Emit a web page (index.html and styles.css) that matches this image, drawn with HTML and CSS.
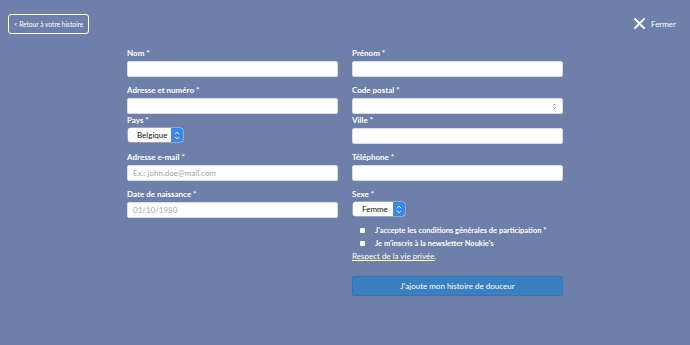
FILE: index.html
```html
<!DOCTYPE html>
<html lang="fr">
<head>
<meta charset="utf-8">
<title>Mon histoire</title>
<link rel="stylesheet" href="styles.css">
</head>
<body>
<div class="page">
  <header class="topbar">
    <a class="back" href="#">&lt; Retour à votre histoire</a>
    <a class="close" href="#">
      <svg width="11" height="11" viewBox="0 0 11 11"><path d="M1 1L10 10M10 1L1 10" stroke="#fff" stroke-width="1.8" stroke-linecap="round"/></svg>
      <span>Fermer</span>
    </a>
  </header>

  <form class="form">
    <div class="field r1"><label>Nom *</label><div class="input"></div></div>
    <div class="field r1"><label>Prénom *</label><div class="input"></div></div>

    <div class="field"><label>Adresse et numéro *</label><div class="input"></div></div>
    <div class="field"><label>Code postal *</label><div class="input spin"><svg width="3" height="7" viewBox="0 0 3 7"><path d="M0.5 2.5L1.5 1L2.5 2.5M0.5 4.5L1.5 6L2.5 4.5" stroke="#777" stroke-width="0.8" fill="none"/></svg></div></div>

    <div class="field tight"><label>Pays *</label><div class="select pays"><span>Belgique</span><i class="step"><svg width="6" height="9" viewBox="0 0 6 9"><path d="M1 3.2L3 1.2L5 3.2M1 5.8L3 7.8L5 5.8" stroke="#fff" stroke-width="1" fill="none"/></svg></i></div></div>
    <div class="field tight"><label>Ville *</label><div class="input"></div></div>

    <div class="field"><label>Adresse e-mail *</label><div class="input ph">Ex.: john.doe@mail.com</div></div>
    <div class="field"><label>Téléphone *</label><div class="input"></div></div>

    <div class="field"><label>Date de naissance *</label><div class="input ph">01/10/1980</div></div>
    <div class="field"><label>Sexe *</label><div class="select sexe"><span>Femme</span><i class="step"><svg width="6" height="9" viewBox="0 0 6 9"><path d="M1 3.2L3 1.2L5 3.2M1 5.8L3 7.8L5 5.8" stroke="#fff" stroke-width="1" fill="none"/></svg></i></div></div>

    <div class="extra">
      <div class="check"><span class="box"></span><span>J'accepte les conditions générales de participation *</span></div>
      <div class="check"><span class="box"></span><span>Je m'inscris à la newsletter Noukie's</span></div>
      <p class="privacy"><a href="#">Respect de la vie privée</a>.</p>
      <button type="button" class="submit">J'ajoute mon histoire de douceur</button>
    </div>
  </form>
</div>
</body>
</html>
```

FILE: styles.css
```css
* { box-sizing: border-box; }
html, body { margin: 0; padding: 0; }
body {
  background: #6e7faa;
  font-family: Lato, "Open Sans", sans-serif;
  color: #fff;
  width: 690px;
  height: 345px;
  overflow: hidden;
}
.page { padding: 14px 14px 0 8px; }
.topbar {
  display: flex;
  justify-content: space-between;
  align-items: flex-start;
  height: 33px;
}
.back {
  display: block;
  width: 81px;
  height: 20px;
  border: 1px solid #fff;
  border-radius: 3px;
  color: #fff;
  text-decoration: none;
  font-size: 6.6px;
  line-height: 18px;
  text-align: center;
  white-space: nowrap;
}
.close {
  display: flex;
  align-items: center;
  gap: 6px;
  margin-top: 4px;
  color: #fff;
  text-decoration: none;
  font-size: 8px;
}
.form {
  display: grid;
  grid-template-columns: 211px 211px;
  column-gap: 14px;
  row-gap: 7px;
  margin-left: 119px;
}
.field label {
  display: block;
  font-weight: 700;
  font-size: 8px;
  line-height: 12px;
  margin-bottom: 2px;
}
.field.tight { margin-top: -7px; }
.input {
  height: 16px;
  background: #fff;
  border: 1px solid #d9dce6;
  border-radius: 2px;
  font-size: 8px;
  line-height: 14px;
  padding-left: 5px;
}
.input.ph { color: #a2a2a2; }
.input.spin {
  display: flex;
  justify-content: flex-end;
  align-items: center;
  padding-right: 6px;
}
.select {
  display: flex;
  align-items: stretch;
  height: 14px;
  background: #fff;
  border-radius: 3px;
  font-size: 8px;
  color: #111;
  margin-left: 1px;
  overflow: hidden;
  box-shadow: 0 0 0 0.5px #c8cbd6;
}
.select span {
  flex: 1;
  line-height: 14px;
  padding-left: 9px;
}
.select.pays { width: 55px; }
.select.sexe { width: 52px; }
.step {
  width: 12px;
  background: #3b86e6;
  display: flex;
  align-items: center;
  justify-content: center;
}
.extra {
  grid-column: 2;
  margin-top: -1px;
}
.check {
  display: flex;
  align-items: center;
  height: 13px;
  font-size: 7.5px;
  font-weight: 700;
  padding-left: 8px;
}
.check .box {
  width: 5px;
  height: 5px;
  background: #fff;
  border-radius: 1px;
  margin-right: 10px;
}
.privacy {
  margin: 0;
  font-size: 8px;
  line-height: 12px;
}
.privacy a { color: #fff; }
.submit {
  display: block;
  margin-top: 14px;
  width: 211px;
  height: 20px;
  background: #3a7fc0;
  border: 1px solid #3474b3;
  border-radius: 2px;
  color: #fff;
  font-family: Lato, sans-serif;
  font-size: 8px;
  padding: 0;
}
```
